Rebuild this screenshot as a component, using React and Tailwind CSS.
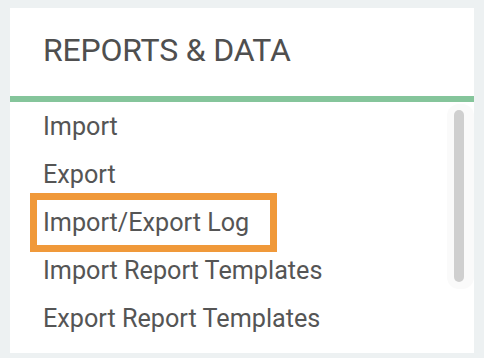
export default function App() {
  const items = [
    "Import",
    "Export",
    "Import/Export Log",
    "Import Report Templates",
    "Export Report Templates",
  ];

  return (
    <div className="w-[484px] h-[358px] bg-[#edf1f2] pt-2 px-[10px] overflow-hidden font-['Roboto',sans-serif]">
      <div className="bg-white h-[345px] flex flex-col">
        {/* header */}
        <div className="h-[88px] flex items-center pl-[33px] pb-[4px]">
          <h2 className="text-[32px] leading-none text-[#4f4f4f] tracking-[-0.2px]">
            REPORTS &amp; DATA
          </h2>
        </div>
        <div className="h-[6px] bg-[#85c59b]" />
        {/* list */}
        <div className="relative flex-1 pt-px">
          {items.map((item, i) => (
            <div
              key={item}
              className="relative h-[48px] leading-[48px] pl-[33px] text-[25.2px] text-[#555555]"
            >
              {item}
              {i === 2 && (
                <div className="absolute left-[20px] top-[-6px] w-[247px] h-[59px] border-[7px] border-[#f0993a]" />
              )}
            </div>
          ))}
          {/* overlay scrollbar */}
          <div className="absolute right-0 top-[2px] w-[27px] h-[185px] rounded-[12px] bg-[#fafafa] flex justify-center pt-[6px] pr-[6px] pl-[3px]">
            <div className="w-[10px] h-[172px] rounded-full bg-[#cfcfcf]" />
          </div>
        </div>
      </div>
    </div>
  );
}
